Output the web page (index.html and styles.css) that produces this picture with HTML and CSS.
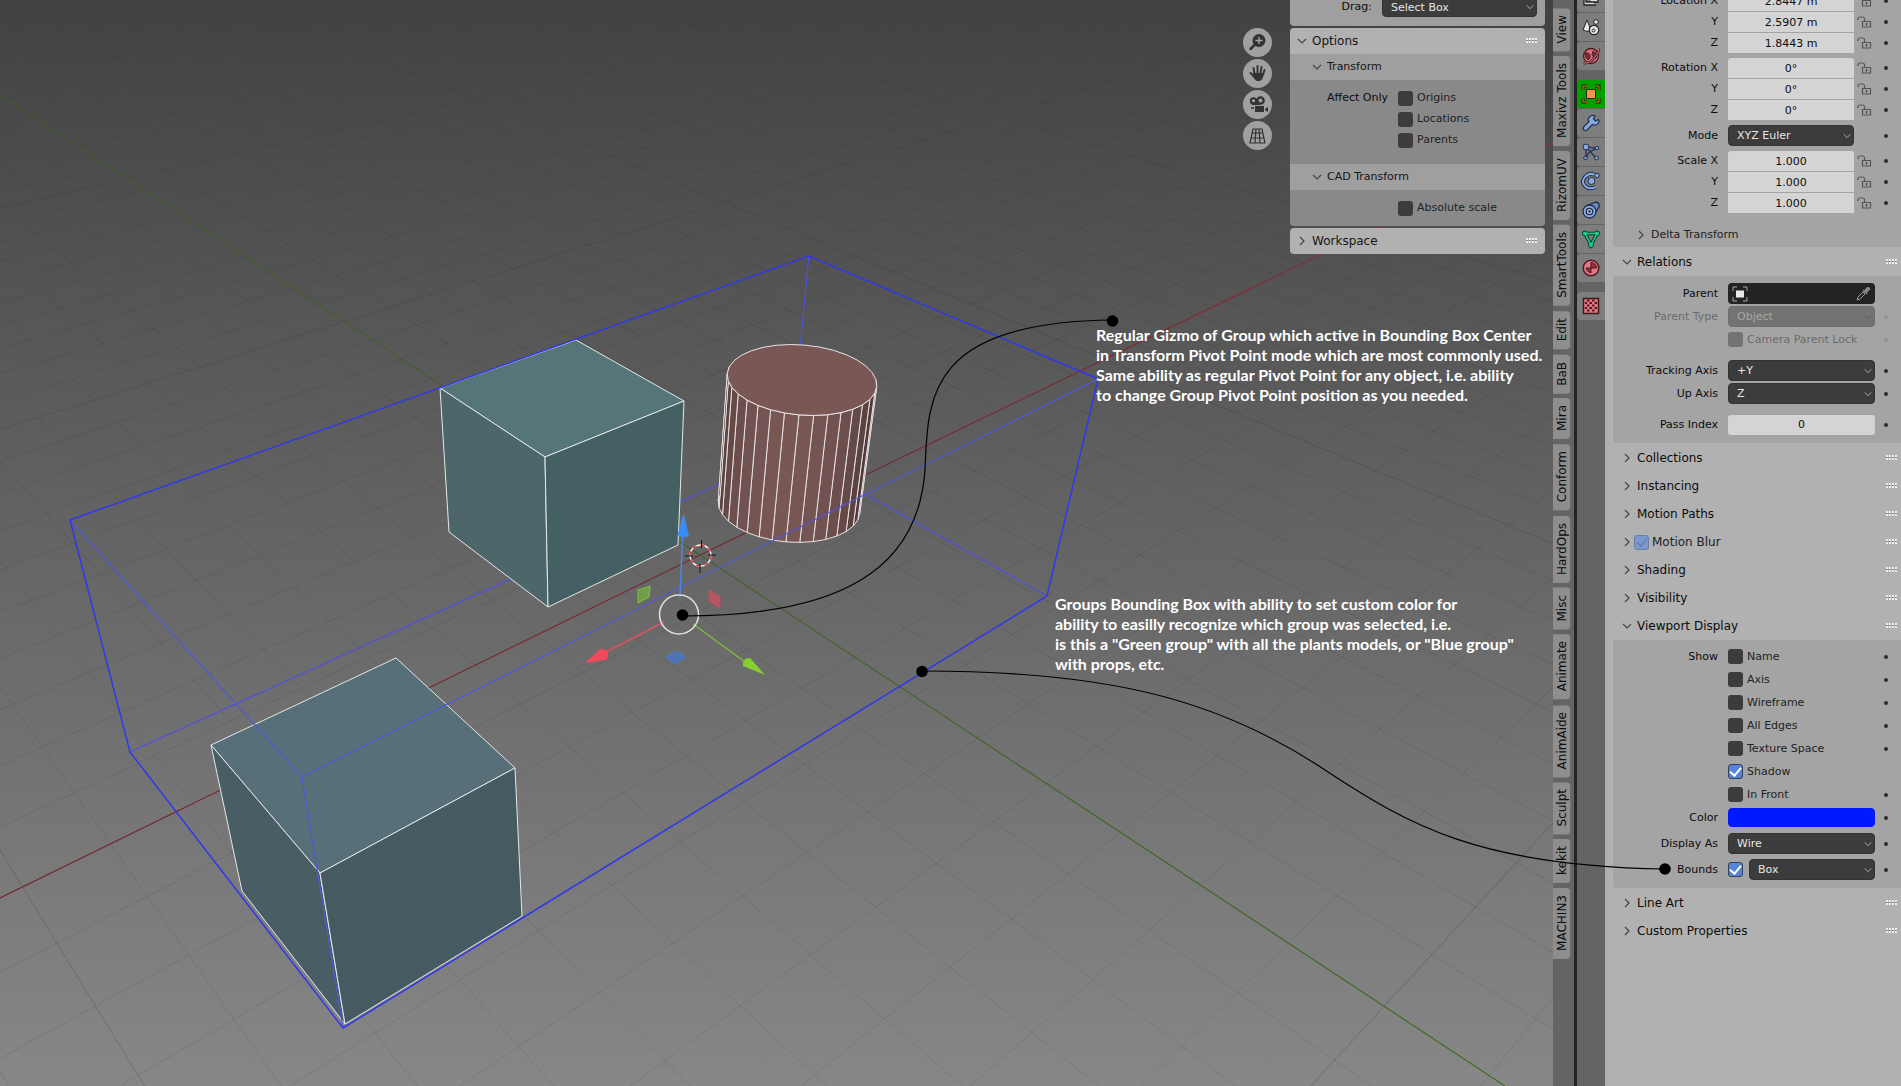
FILE: index.html
```html
<!DOCTYPE html>
<html lang="en">
<head>
<meta charset="utf-8">
<title>3D Viewport</title>
<link rel="stylesheet" href="styles.css">
</head>
<body>
<svg class="defs" aria-hidden="true">
  <symbol id="down" viewBox="0 0 12 12"><path d="M2 4l4 4 4-4" fill="none" stroke="currentColor" stroke-width="1.2"/></symbol>
  <symbol id="right" viewBox="0 0 12 12"><path d="M4 2l4 4-4 4" fill="none" stroke="currentColor" stroke-width="1.2"/></symbol>
  <symbol id="grip" viewBox="0 0 12 6"><path d="M0 1h2M3 1h2M6 1h2M9 1h2M0 4h2M3 4h2M6 4h2M9 4h2" stroke="#eee" stroke-width="2"/><path d="M0 2.5h11" stroke="#888" stroke-width="1" stroke-dasharray="2 1"/></symbol>
  <symbol id="lock" viewBox="0 0 16 14"><path d="M6.500 6.500h8v5.500h-8zM8.500 6V4a2 2 0 0 0-2-2H4a2 2 0 0 0-2 2v1" fill="none" stroke="#555" stroke-width="1.200"/><path d="M10.500 8v2.500" stroke="#444" stroke-width="1.500"/></symbol>
</svg>

<div class="app">
  <main class="viewport">
    <svg class="scene" viewBox="0 0 1553 1086" preserveAspectRatio="xMinYMin slice" aria-hidden="true">
      <defs>
        <linearGradient id="fade" gradientUnits="userSpaceOnUse" x1="0" y1="0" x2="0" y2="1086">
          <stop offset="0" stop-color="#000" stop-opacity="0.03"/>
          <stop offset="0.3" stop-color="#000" stop-opacity="0.09"/>
          <stop offset="1" stop-color="#000" stop-opacity="0.11"/>
        </linearGradient>
        <linearGradient id="redFade" gradientUnits="userSpaceOnUse" x1="0" y1="898" x2="1553" y2="140">
          <stop offset="0" stop-color="#7a2229"/><stop offset="0.6" stop-color="#742a33"/><stop offset="1" stop-color="#8c2f3c"/>
        </linearGradient>
        <linearGradient id="greenFade" gradientUnits="userSpaceOnUse" x1="0" y1="95" x2="1505" y2="1086">
          <stop offset="0" stop-color="#42592f"/><stop offset="1" stop-color="#3f6b28"/>
        </linearGradient>
      </defs>
      <g id="grid" fill="none" stroke="url(#fade)"></g>
      <path d="M0 898L700 555L1320 255L1553 143" stroke="url(#redFade)" stroke-width="1.200" fill="none"/>
      <path d="M0 95L700 555L1505 1086" stroke="url(#greenFade)" stroke-width="1.200" fill="none"/>
      <g stroke="#4d52dc" stroke-width="1.200" fill="none">
        <path d="M130 752L790 452L1047 596M790 452L809 256"/>
      </g>
      <g stroke="#e4e8e8" stroke-width="1" stroke-linejoin="round">
        <path fill="#567579" d="M440 388L576 340L684 401L545 457Z"/>
        <path fill="#4c6669" d="M440 388L545 457L548 607L449 532Z"/>
        <path fill="#456063" d="M545 457L684 401L678 545L548 607Z"/>
        <path fill="#566f78" d="M211 745L396 658L515 768L320 873Z"/>
        <path fill="#485d64" d="M211 745L320 873L345 1024L242 891Z"/>
        <path fill="#465b61" d="M320 873L515 768L522 916L345 1024Z"/>
      </g>
      <g id="cylinder"></g>
      <g stroke="#4f58dc" stroke-width="1.200" fill="none">
        <path d="M70 520L302 777L866 494L1098 379M302 777L343 1028"/>
      </g>
      <path d="M70 520L809 256L1098 379L1047 596L343 1028L130 752Z" fill="none" stroke="#3038ea" stroke-width="1.500"/>
      <g fill="none">
        <circle cx="700.500" cy="555.500" r="10.500" stroke="#f3f3f3" stroke-width="1.300"/>
        <circle cx="700.500" cy="555.500" r="10.500" stroke="#e03040" stroke-width="1.300" stroke-dasharray="4.100 4.100"/>
        <path d="M701.500 540v8M700 564v9M685 556h8M708 555h8" stroke="#111"/>
      </g>
      <path d="M680 598L682.500 536" stroke="#4d86e0" stroke-width="1.500"/>
      <path d="M683.500 513L677.500 535Q683 539 689 536Z" fill="#3a8cf5"/>
      <path d="M664 622L606 652" stroke="#dc5164" stroke-width="1.500"/>
      <path d="M585 663L600 649Q609 648 608 656Q608 658 606 660Z" fill="#f3495e"/>
      <path d="M693 624L745 662" stroke="#80b93c" stroke-width="1.500"/>
      <path d="M765 675L750 658Q742 658 743 666Z" fill="#85cf33"/>
      <path d="M638 590L650 586L649 597L638 603Z" fill="#6f9e46" stroke="#82bd45"/>
      <path d="M709 590L720 597V608L709 601Z" fill="#b55663" stroke="#c04f60"/>
      <path d="M665 657L677 651L686 657L675 664Z" fill="#4f74b5" stroke="#5079c4"/>
      <circle cx="679" cy="614.500" r="19.500" fill="none" stroke="#dedede" stroke-width="1.600"/>
    </svg>

    <nav class="view-nav" aria-label="View navigation">
      <button aria-label="Zoom"><svg viewBox="0 0 29 29"><circle cx="16" cy="12.500" r="6.500" fill="#333"/><path d="M11.500 17L7.500 21" stroke="#333" stroke-width="2.500" stroke-linecap="round"/><path d="M16 9v7M12.500 12.500h7" stroke="#aaa" stroke-width="1.300"/></svg></button>
      <button aria-label="Pan"><svg viewBox="0 0 29 29"><path d="M11.500 15L10.500 9M14.500 14V7M17.500 14.500L18.500 8M20 16L21.500 11M11.500 18L7.500 14" stroke="#333" stroke-width="1.900" stroke-linecap="round"/><path d="M10.500 14h10l-.5 4q-1 4-4 4h-2q-2-.5-4.500-5z" fill="#333"/></svg></button>
      <button aria-label="Camera view"><svg viewBox="0 0 29 29"><circle cx="10.500" cy="11" r="2.700" fill="none" stroke="#333" stroke-width="2"/><circle cx="17.500" cy="10.500" r="3.200" fill="none" stroke="#333" stroke-width="2.300"/><path d="M9 12h8v3H9zM12 16h9v6h-9zM22 19l3-2v5l-3-2z" fill="#333"/><path d="M8 18h3" stroke="#333" stroke-width="1.500"/></svg></button>
      <button aria-label="Toggle perspective"><svg viewBox="0 0 29 29"><path d="M10 8h9l3 14H7zM8.500 17h12M9.500 12h10M13 8l-1 14M16 8l1 14" fill="none" stroke="#333" stroke-width="1.200"/></svg></button>
    </nav>

    <aside class="sidebar">
      <section class="tool-panel drag-panel">
        <label for="drag">Drag:</label>
        <span class="select"><select id="drag"><option>Select Box</option></select><svg><use href="#down"/></svg></span>
      </section>
      <section class="tool-panel">
        <h2><button><svg class="chev"><use href="#down"/></svg>Options</button><svg class="grip"><use href="#grip"/></svg></h2>
        <h3><button><svg class="chev"><use href="#down"/></svg>Transform</button></h3>
        <div class="tool-body tall">
          <span class="caption">Affect Only</span>
          <div class="checks">
            <label><input type="checkbox">Origins</label>
            <label><input type="checkbox">Locations</label>
            <label><input type="checkbox">Parents</label>
          </div>
        </div>
        <h3><button><svg class="chev"><use href="#down"/></svg>CAD Transform</button></h3>
        <div class="tool-body">
          <span class="caption"></span>
          <div class="checks"><label><input type="checkbox">Absolute scale</label></div>
        </div>
      </section>
      <section class="tool-panel">
        <h2><button><svg class="chev"><use href="#right"/></svg>Workspace</button><svg class="grip"><use href="#grip"/></svg></h2>
      </section>
    </aside>

    <p class="note note-gizmo">Regular Gizmo of Group which active in Bounding Box Center<br>in Transform Pivot Point mode which are most commonly used.<br>Same ability as regular Pivot Point for any object, i.e. ability<br>to change Group Pivot Point position as you needed.</p>
    <p class="note note-bounds">Groups Bounding Box with ability to set custom color for<br>ability to easilly recognize which group was selected, i.e.<br>is this a "Green group" with all the plants models, or "Blue group"<br>with props, etc.</p>
  </main>

  <nav class="tabs" aria-label="Sidebar tabs">
    <button>View</button><button>Maxivz Tools</button><button>RizomUV</button><button>SmartTools</button><button>Edit</button><button>BaB</button><button>Mira</button><button>Conform</button><button>HardOps</button><button>Misc</button><button>Animate</button><button>AnimAide</button><button>Sculpt</button><button>kekit</button><button>MACHIN3</button>
  </nav>

  <nav class="contexts" aria-label="Property contexts">
    <button aria-label="View layer"><svg viewBox="0 0 20 20"><path d="M5 4h12v10H5zM3 7v10h12" fill="#ddd" stroke="#222" stroke-width="1.300"/><path d="M7 12l3-3 3 3" fill="#333"/></svg></button>
    <button aria-label="Scene"><svg viewBox="0 0 20 20"><path d="M6 3L2 13q4 3 8 0z" fill="#e6e6e6" stroke="#222"/><circle cx="15" cy="5" r="2.300" fill="#e6e6e6" stroke="#222"/><circle cx="13" cy="13" r="4.700" fill="#e6e6e6" stroke="#222" stroke-width="1.200"/><circle cx="12.500" cy="13.500" r="1.500" fill="none" stroke="#222"/><path d="M15 10l2-1" stroke="#222"/></svg></button>
    <button aria-label="World"><svg viewBox="0 0 20 20"><circle cx="10" cy="10" r="7.500" fill="#e0707c" stroke="#4a2025" stroke-width="1.300"/><path d="M4 7q4-1 5 2t-2 5q-3-2-3-7M12 5l4 3-1 4-2 1-2-5z" fill="#7d303b" stroke="#4a2025"/><path d="M2.500 17Q9 18 14 11T17.500 3" fill="none" stroke="#4a2025" stroke-width="2.500"/><path d="M2.500 17Q9 18 14 11T17.500 3" fill="none" stroke="#e8808a"/></svg></button>
    <button class="active" aria-label="Object"><svg viewBox="0 0 20 20"><path d="M5.500 5.500h9v9h-9z" fill="#f4964c" stroke="#3a2000"/><path d="M2 6V2h4M14 2h4v4M18 14v4h-4M6 18H2v-4" fill="none" stroke="#1c2600" stroke-width="3"/><path d="M2 6V2h4M14 2h4v4M18 14v4h-4M6 18H2v-4" fill="none" stroke="#c98a30" stroke-width="1"/></svg></button>
    <button aria-label="Modifiers"><svg viewBox="0 0 20 20"><path d="M17.500 6.500l-3 1.500-2-2L14 3q-3-1.500-5.500 1T8 8.500L2.500 14q-1 2 .5 3t3 0l5.500-5.500Q15 13 17 10.500t.5-4z" fill="#86a8e0" stroke="#222e46" stroke-width="1.200"/></svg></button>
    <button aria-label="Particles"><svg viewBox="0 0 20 20"><path d="M5 5v11M5 5l11 1M5 5l10 11M6 15q1-6 9-8" fill="none" stroke="#2a3b5a" stroke-width="1.500"/><g fill="#86a8e0" stroke="#222e46"><circle cx="5" cy="5" r="3"/><circle cx="4.500" cy="16" r="1.800"/><circle cx="16" cy="6" r="1.800"/><circle cx="15.500" cy="16" r="1.900"/></g></svg></button>
    <button aria-label="Physics"><svg viewBox="0 0 20 20"><path d="M14 4Q8 1 4 6t0 9q4 4 11 1" fill="none" stroke="#222e46" stroke-width="4"/><path d="M14 4Q8 1 4 6t0 9q4 4 11 1" fill="none" stroke="#86a8e0" stroke-width="2"/><circle cx="10.500" cy="10" r="3.500" fill="#86a8e0" stroke="#222e46"/><circle cx="16" cy="4.500" r="2.300" fill="#86a8e0" stroke="#222e46"/></svg></button>
    <button aria-label="Constraints"><svg viewBox="0 0 20 20"><path d="M6 5.500L15 2q4 1 3 5l-5 8" fill="#6787bd" stroke="#222e46" stroke-width="1.300"/><circle cx="8.500" cy="11.500" r="6.500" fill="#86a8e0" stroke="#222e46" stroke-width="1.300"/><circle cx="8.500" cy="11.500" r="3.200" fill="#a9c0ea" stroke="#222e46" stroke-width="1.300"/><circle cx="8.500" cy="11.500" r="1.200" fill="#222e46"/></svg></button>
    <button aria-label="Object data"><svg viewBox="0 0 20 20"><path d="M4 4.500h12L10 16z" fill="none" stroke="#0c3b2b" stroke-width="3.600"/><g fill="#1fd08c" stroke="#0c3b2b"><circle cx="4" cy="4.500" r="2.500"/><circle cx="16" cy="4.500" r="2.500"/><circle cx="10" cy="16" r="2.500"/></g><path d="M4 4.500h12L10 16z" fill="none" stroke="#1fd08c" stroke-width="1.600"/></svg></button>
    <button aria-label="Material"><svg viewBox="0 0 20 20"><circle cx="10" cy="10" r="7.800" fill="#e57583" stroke="#4a1c22" stroke-width="1.500"/><path d="M10 4.500a5.500 5.500 0 0 1 5.500 5.500H10zM5 10h5v5q-4-1-5-5z" fill="#8d3340" stroke="#4a1c22"/></svg></button>
    <button aria-label="Texture"><svg viewBox="0 0 20 20"><path d="M2.500 2.500h15v15h-15z" fill="#e57583" stroke="#3c1a1e" stroke-width="1.500"/><path d="M6 4.500h2.500M11 4.500h2.500M4 7h2M8.500 7H11M13.500 7H16M6 9.500h2.500M11 9.500h2.500M4 12h2M8.500 12H11M13.500 12H16M6 14.500h2.500M11 14.500h2.500" stroke="#4a1c22" stroke-width="2"/></svg></button>
  </nav>

  <aside class="properties">
    <div class="box transform-box">
      <div class="fields">
        <label for="lx">Location X</label><input id="lx" class="num" value="2.8447 m"><svg class="lock"><use href="#lock"/></svg><i class="dot"></i>
        <label for="ly">Y</label><input id="ly" class="num" value="2.5907 m"><svg class="lock"><use href="#lock"/></svg><i class="dot"></i>
        <label for="lz">Z</label><input id="lz" class="num" value="1.8443 m"><svg class="lock"><use href="#lock"/></svg><i class="dot"></i>
      </div>
      <div class="fields">
        <label for="rx">Rotation X</label><input id="rx" class="num" value="0°"><svg class="lock"><use href="#lock"/></svg><i class="dot"></i>
        <label for="ry">Y</label><input id="ry" class="num" value="0°"><svg class="lock"><use href="#lock"/></svg><i class="dot"></i>
        <label for="rz">Z</label><input id="rz" class="num" value="0°"><svg class="lock"><use href="#lock"/></svg><i class="dot"></i>
      </div>
      <div class="fields">
        <label for="mode">Mode</label><span class="select"><select id="mode"><option>XYZ Euler</option></select><svg><use href="#down"/></svg></span><span></span><i class="dot"></i>
      </div>
      <div class="fields">
        <label for="sx">Scale X</label><input id="sx" class="num" value="1.000"><svg class="lock"><use href="#lock"/></svg><i class="dot"></i>
        <label for="sy">Y</label><input id="sy" class="num" value="1.000"><svg class="lock"><use href="#lock"/></svg><i class="dot"></i>
        <label for="sz">Z</label><input id="sz" class="num" value="1.000"><svg class="lock"><use href="#lock"/></svg><i class="dot"></i>
      </div>
      <button class="sub"><svg class="chev"><use href="#right"/></svg>Delta Transform</button>
    </div>

    <div class="section"><button><svg class="chev"><use href="#down"/></svg>Relations</button><svg class="grip"><use href="#grip"/></svg></div>
    <div class="box relations-box">
      <div class="row"><label for="parent">Parent</label><span class="parent"><svg viewBox="0 0 16 16"><path d="M4 4.500h8v7H4z" fill="#e8e8e8"/><path d="M1 5V1h4M11 1h4v4M15 11v4h-4M5 15H1v-4" fill="none" stroke="#aaa"/></svg><input id="parent" value=""><svg viewBox="0 0 16 16"><path d="M2 14l1-3 5-5 2 2-5 5z" fill="none" stroke="#999"/><path d="M8 4l4 4M9.500 5.500L12 2q2-1 2.500 1L11 6.500z" fill="#888" stroke="#888" stroke-width="1.500"/></svg></span></div>
      <div class="row off"><label for="ptype">Parent Type</label><span class="select"><select id="ptype" disabled><option>Object</option></select><svg><use href="#down"/></svg></span><i class="dot"></i></div>
      <div class="row off"><span></span><label class="check"><input type="checkbox" disabled>Camera Parent Lock</label><i class="dot"></i></div>
      <div class="row spaced"><label for="track">Tracking Axis</label><span class="select"><select id="track"><option>+Y</option></select><svg><use href="#down"/></svg></span><i class="dot"></i></div>
      <div class="row"><label for="up">Up Axis</label><span class="select"><select id="up"><option>Z</option></select><svg><use href="#down"/></svg></span><i class="dot"></i></div>
      <div class="row spaced"><label for="pass">Pass Index</label><input id="pass" class="num" value="0"><i class="dot"></i></div>
    </div>

    <div class="section"><button><svg class="chev"><use href="#right"/></svg>Collections</button><svg class="grip"><use href="#grip"/></svg></div>
    <div class="section"><button><svg class="chev"><use href="#right"/></svg>Instancing</button><svg class="grip"><use href="#grip"/></svg></div>
    <div class="section"><button><svg class="chev"><use href="#right"/></svg>Motion Paths</button><svg class="grip"><use href="#grip"/></svg></div>
    <div class="section"><button aria-label="Expand Motion Blur"><svg class="chev"><use href="#right"/></svg></button><label class="check faded"><input type="checkbox" checked>Motion Blur</label><svg class="grip"><use href="#grip"/></svg></div>
    <div class="section"><button><svg class="chev"><use href="#right"/></svg>Shading</button><svg class="grip"><use href="#grip"/></svg></div>
    <div class="section"><button><svg class="chev"><use href="#right"/></svg>Visibility</button><svg class="grip"><use href="#grip"/></svg></div>
    <div class="section"><button><svg class="chev"><use href="#down"/></svg>Viewport Display</button><svg class="grip"><use href="#grip"/></svg></div>
    <div class="box display-box">
      <div class="row"><span class="caption">Show</span><label class="check"><input type="checkbox">Name</label><i class="dot"></i></div>
      <div class="row"><span></span><label class="check"><input type="checkbox">Axis</label><i class="dot"></i></div>
      <div class="row"><span></span><label class="check"><input type="checkbox">Wireframe</label><i class="dot"></i></div>
      <div class="row"><span></span><label class="check"><input type="checkbox">All Edges</label><i class="dot"></i></div>
      <div class="row"><span></span><label class="check"><input type="checkbox">Texture Space</label><i class="dot"></i></div>
      <div class="row"><span></span><label class="check"><input type="checkbox" checked>Shadow</label></div>
      <div class="row"><span></span><label class="check"><input type="checkbox">In Front</label><i class="dot"></i></div>
      <div class="row"><label for="color">Color</label><input id="color" type="color" value="#0019ff"><i class="dot"></i></div>
      <div class="row near"><label for="disp">Display As</label><span class="select"><select id="disp"><option>Wire</option></select><svg><use href="#down"/></svg></span><i class="dot"></i></div>
      <div class="row near"><label for="bounds">Bounds</label><span class="pair"><input id="bounds" type="checkbox" checked><span class="select"><select aria-label="Bounds type"><option>Box</option></select><svg><use href="#down"/></svg></span></span><i class="dot"></i></div>
    </div>
    <div class="section"><button><svg class="chev"><use href="#right"/></svg>Line Art</button><svg class="grip"><use href="#grip"/></svg></div>
    <div class="section"><button><svg class="chev"><use href="#right"/></svg>Custom Properties</button><svg class="grip"><use href="#grip"/></svg></div>
  </aside>

  <svg class="leaders" viewBox="0 0 1901 1086" preserveAspectRatio="xMinYMin slice" aria-hidden="true">
    <path d="M682 616C840 616 918 570 925 470C928 400 925 322 1112 320M922 671C1110 671 1220 700 1325 770C1410 826 1480 866 1665 869" fill="none" stroke="#000" stroke-width="1.200"/>
    <circle cx="682.500" cy="615" r="5.800"/><circle cx="1112.500" cy="321" r="5.800"/><circle cx="922" cy="671.500" r="5.800"/><circle cx="1665" cy="869" r="5.800"/>
  </svg>
</div>
<script src="scene.js"></script>
</body>
</html>
```
FILE: styles.css
```css
* { box-sizing: border-box; }
body {
  margin: 0;
  font: 11px/16px "DejaVu Sans", sans-serif;
  color: #0c0c0c;
}
button, input, select { font: inherit; color: inherit; margin: 0; }
button { border: 0; padding: 0; background: none; text-align: left; }
h2, h3, p { margin: 0; font-weight: 400; }
.defs { position: absolute; width: 0; height: 0; }

.app {
  position: relative;
  display: grid;
  grid-template-columns: 1fr 21px 31px 296px;
  height: 100vh;
  overflow: hidden;
}

/* viewport */
.viewport {
  position: relative;
  display: flex;
  justify-content: flex-end;
  align-items: flex-start;
  gap: 18px;
  padding-right: 8px;
  overflow: hidden;
  background: linear-gradient(#424242, #878787);
}
.scene { position: absolute; left: 0; top: 0; width: 100%; height: 100%; }
.view-nav { position: relative; display: grid; gap: 2px; padding-top: 28px; }
.view-nav button { width: 29px; height: 29px; border-radius: 50%; background: #a0a0a0; }
.view-nav svg { display: block; width: 29px; height: 29px; }

.sidebar { position: relative; display: grid; gap: 2px; width: 255px; }
.tool-panel { border-radius: 4px; overflow: hidden; }
.drag-panel {
  display: flex;
  justify-content: flex-end;
  gap: 10px;
  height: 30px;
  margin-top: -4px;
  padding-right: 8px;
  line-height: 21px;
  background: #9f9f9f;
}
.drag-panel .select { width: 155px; }
.tool-panel h2, .tool-panel h3 { display: flex; align-items: center; height: 26px; background: #b1b1b1; }
.tool-panel h2 { padding: 0 7px 0 6px; justify-content: space-between; font-size: 12px; }
.tool-panel h3 { padding-left: 21px; background: #9f9f9f; font-size: 11px; }
.tool-panel button { display: flex; align-items: center; gap: 4px; color: #151515; }
.tool-body {
  display: grid;
  grid-template-columns: 98px 1fr;
  gap: 10px;
  padding: 10px 0;
  background: #898989;
}
.tool-body.tall { padding-bottom: 16px; }
.caption { text-align: right; }
.checks { display: grid; gap: 5px; }
.checks label, .check { display: flex; align-items: center; gap: 4px; color: #222; }

.chev { width: 12px; height: 12px; color: #444; }
.grip { width: 12px; height: 6px; }

.note {
  position: absolute;
  font: 700 16px/20px Lato, sans-serif;
  color: #fff;
  white-space: nowrap;
}
.note-gizmo { left: 1096px; top: 325px; }
.note-bounds { left: 1055px; top: 594px; }

/* controls */
input[type="checkbox"] {
  appearance: none;
  flex: none;
  width: 15px;
  height: 15px;
  border-radius: 3px;
  background: #3c3c3c;
}
input[type="checkbox"]:checked {
  border: 1px solid #33415a;
  background: #5584d6;
  display: grid;
  place-items: center;
}
input[type="checkbox"]:checked::after {
  content: "";
  width: 5px;
  height: 9px;
  border: solid #fff;
  border-width: 0 2px 2px 0;
  transform: translateY(-1px) rotate(40deg);
}
.faded input[type="checkbox"]:checked { border-color: #6a7ea4; background: #7b98cf; }
.faded input[type="checkbox"]:checked::after { border-color: #5b76a8; border-width: 0 1px 1px 0; }
.select { position: relative; display: block; height: 21px; min-width: 0; }
.select select {
  appearance: none;
  display: block;
  width: 100%;
  height: 21px;
  padding: 0 8px;
  border: 1px solid #333;
  border-radius: 4px;
  background: #3c3c3c;
  color: #e6e6e6;
}
.select svg { position: absolute; right: 1px; top: 6px; width: 12px; height: 10px; color: #aaa; pointer-events: none; }
.num {
  width: 100%;
  height: 20px;
  padding: 0;
  border: 0;
  border-radius: 3px;
  background: #d4d4d4;
  text-align: center;
}

/* vertical tabs */
.tabs {
  display: flex;
  flex-direction: column;
  gap: 5px;
  padding: 8px 3px 0 0;
  background: #646464;
}
.tabs button {
  flex: none;
  width: 18px;
  padding: 8px 0 7px;
  writing-mode: vertical-rl;
  transform: rotate(180deg);
  font-size: 12px;
  line-height: 18px;
  border: solid #6f6f6f;
  border-width: 0 0 0 1px;
  border-radius: 4px 0 0 4px;
  background: #8e8e8e;
}

/* context icons */
.contexts {
  display: flex;
  flex-direction: column;
  gap: 1px;
  border-left: 3px solid #242424;
  background: #646464;
}
.contexts button {
  display: grid;
  place-items: center;
  height: 28px;
  flex: none;
  border-radius: 4px 0 0 4px;
  background: #7d7d7d;
}
.contexts button:first-child { margin-top: -16px; }
.contexts button:nth-child(4), .contexts button:last-child { margin-top: 9px; }
.contexts .active { background: #00a000; }
.contexts svg { width: 20px; height: 20px; }

/* properties */
.properties { background: #b1b1b1; }
.box { margin: 0 0 1px 8px; padding: 8px 0; border-radius: 0 0 0 4px; background: #a4a4a4; }
.transform-box { margin-top: -9px; padding: 0; display: grid; gap: 5px; }
.relations-box { padding-top: 7px; }
.display-box { padding-top: 6px; }
.fields {
  display: grid;
  grid-template-columns: 105px 10px 126px 21px 26px;
  row-gap: 1px;
  align-items: center;
}
.fields label, .row > label:first-child { text-align: right; }
.fields label { grid-column: 1; }
.fields label + * { grid-column: 3; }
.fields .num { border-radius: 0; }
.fields label:first-child + .num { border-radius: 3px 3px 0 0; }
.lock { width: 16px; height: 14px; margin-left: 2px; }
.dot { width: 4px; height: 4px; margin-left: 9px; border-radius: 50%; background: #2c2c2c; }
.sub {
  display: flex;
  align-items: center;
  gap: 4px;
  height: 24px;
  margin-top: 5px;
  padding-left: 22px;
  color: #222;
}
.section { display: flex; align-items: center; height: 28px; padding: 0 3px 0 16px; font-size: 12px; }
.section button { display: flex; align-items: center; gap: 4px; min-height: 16px; }
.section .grip { margin-left: auto; }
.row {
  display: grid;
  grid-template-columns: 105px minmax(0, 1fr) 26px;
  align-items: center;
  height: 21px;
}
.row > :nth-child(2) { margin-left: 10px; }
.row > .num, .row > input { width: auto; }
.row + .row { margin-top: 2px; }
.row + .row.spaced { margin-top: 10px; }
.row + .row.near { margin-top: 5px; }
.faded { gap: 3px; margin-left: 1px; }
.off { color: #6c6c6c; }
.off .check { color: #6c6c6c; }
.off .dot { background: #929292; }
.off input[type="checkbox"] { background: #737373; }
.off .select select { background: #737373; border-color: #6e6e6e; color: #a8a8a8; opacity: 1; }
.off .select svg { color: #5c5c5c; }
.parent {
  display: flex;
  align-items: center;
  gap: 4px;
  height: 21px;
  padding: 0 4px;
  border-radius: 4px;
  background: #232323;
}
.parent svg { flex: none; width: 16px; height: 16px; }
.parent input { flex: 1; min-width: 0; border: 0; background: none; color: #eee; }
.pair { display: flex; align-items: center; gap: 6px; }
.pair .select { flex: 1; }
input[type="color"] { appearance: none; height: 19px; padding: 0; border: 0; border-radius: 4px; background: none; overflow: hidden; }
input[type="color"]::-webkit-color-swatch-wrapper { padding: 0; }
input[type="color"]::-webkit-color-swatch { border: 0; border-radius: 4px; }

.leaders { position: absolute; left: 0; top: 0; width: 100%; height: 100%; pointer-events: none; }
```
FILE: scene.js
```js
// Projects floor coordinates (u along the red axis, v along the green axis).
function project(u, v) {
  const d = 1 + 0.0254 * u - 0.0317 * v;
  return [(700 + 68.4 * u + 24.6 * v) / d, (555 - 10.54 * u + 13.16 * v) / d];
}

function add(parent, name, attrs) {
  const el = document.createElementNS("http://www.w3.org/2000/svg", name);
  for (const key in attrs) el.setAttribute(key, attrs[key]);
  parent.appendChild(el);
}

const grid = document.getElementById("grid");
let minor = "";
let major = "";
for (let k = -100; k <= 100; k++) {
  if (k === 0) continue;
  const uNear = (0.3 - 1 + 0.0317 * k) / 0.0254;
  const vNear = (1 + 0.0254 * k - 0.3) / 0.0317;
  let seg = "";
  if (uNear < 100) seg += "M" + project(uNear, k) + "L" + project(140, k);
  if (vNear > -100) seg += "M" + project(k, vNear) + "L" + project(k, -140);
  if (k % 10 === 0) major += seg;
  else if (Math.abs(k) < 60) minor += seg;
}
add(grid, "path", { d: minor, opacity: 0.85 });
add(grid, "path", { d: major, "stroke-width": 1.3 });

const tilt = (5 * Math.PI) / 180;
function ring(cx, cy, rx, ry, t) {
  const x = rx * Math.cos(t);
  const y = ry * Math.sin(t);
  return [cx + x * Math.cos(tilt) - y * Math.sin(tilt), cy + x * Math.sin(tilt) + y * Math.cos(tilt)];
}
const top3 = (t) => ring(802, 380, 75, 35, t);
const low3 = (t) => ring(789, 507, 71, 35, t);
const cyl = document.getElementById("cylinder");
const step = Math.PI / 16;
for (let i = -1; i < 17; i++) {
  const a = i * step;
  const b = a + step;
  const light = Math.max(0, Math.sin((a + b) / 2 - 0.1));
  const k = 0.52 + 0.48 * Math.pow(light, 0.7);
  const fill = `rgb(${Math.round(120 * k)},${Math.round(87 * k)},${Math.round(85 * k)})`;
  add(cyl, "path", { d: `M${top3(a)}L${top3(b)}L${low3(b)}L${low3(a)}Z`, fill, stroke: "#e8e2e2" });
}
let rim = "";
for (let i = 0; i < 32; i++) rim += (i ? "L" : "M") + top3(i * step);
add(cyl, "path", { d: rim + "Z", fill: "#785755", stroke: "#ece6e6" });
```
